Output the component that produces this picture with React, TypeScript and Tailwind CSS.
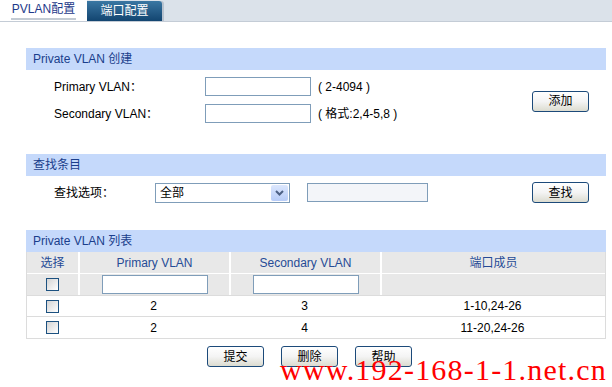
import React from 'react'

const font = "font-['Liberation_Sans','Noto_Sans_CJK_SC',sans-serif]"

function Checkbox() {
  return (
    <span className="inline-block w-[13px] h-[13px] border border-[#1c5180] bg-gradient-to-br from-[#d4d4d4] to-white" />
  )
}

function Btn({ label }: { label: string }) {
  return (
    <button className="w-[57px] h-[21px] rounded-[3px] border border-[#1c4a7a] bg-gradient-to-b from-white via-[#f4f4f4] to-[#dcdcd0] text-[12px] text-black leading-none">
      {label}
    </button>
  )
}

function SectionHeader({ title }: { title: string }) {
  return (
    <div className="h-[22px] bg-[#c5d9fb] flex items-center pl-[7px] text-[12px] text-[#1a3e8c]">{title}</div>
  )
}

function TextBox({ w, bg = 'bg-white' }: { w: string; bg?: string }) {
  return <div className={`${w} h-[19px] border border-[#7f9db9] ${bg}`} />
}

export default function App() {
  return (
    <div className={`relative w-[612px] h-[387px] bg-white overflow-hidden ${font} text-[12px] text-black`}>
      {/* tabs */}
      <div className="flex h-[22px] bg-[#dbe2ea] border-b border-[#c4ccd6]">
        <div className="w-[87px] bg-white flex items-end justify-center pb-[1px]">
          <span className="text-[#1e3a8a] border-b-2 border-[#c3cbd3] px-[1px] leading-[18px]">PVLAN配置</span>
        </div>
        <div className="mt-[1px] w-[75px] rounded-tr-[3px] bg-gradient-to-b from-[#3a77a3] to-[#124570] text-white flex items-center justify-center shadow-[2px_0_0_#b9c3cf]">
          端口配置
        </div>
      </div>

      <div className="ml-[26px] w-[580px]">
        {/* section 1 */}
        <div className="mt-[26px]">
          <SectionHeader title="Private VLAN 创建" />
          <div className="flex items-center pt-[7px]">
            <div className="flex flex-col gap-[8px] flex-1">
              <div className="flex items-center h-[19px]">
                <span className="w-[179px] shrink-0 pl-[28px]">Primary VLAN：</span>
                <TextBox w="w-[106px]" />
                <span className="ml-[7px]">( 2-4094 )</span>
              </div>
              <div className="flex items-center h-[19px]">
                <span className="w-[179px] shrink-0 pl-[28px]">Secondary VLAN：</span>
                <TextBox w="w-[106px]" />
                <span className="ml-[7px]">( 格式:2,4-5,8 )</span>
              </div>
            </div>
            <div className="mr-[17px] mt-[2px]">
              <Btn label="添加" />
            </div>
          </div>
        </div>

        {/* section 2 */}
        <div className="mt-[31px]">
          <SectionHeader title="查找条目" />
          <div className="flex items-center pt-[6px]">
            <span className="w-[129px] shrink-0 pl-[28px]">查找选项：</span>
            <div className="w-[135px] h-[20px] border border-[#7f9db9] bg-white flex items-center justify-between pl-[4px] pr-[1px]">
              <span>全部</span>
              <span className="w-[17px] h-[16px] rounded-[2px] bg-gradient-to-b from-[#dce7fd] to-[#b7ccf8] flex items-center justify-center">
                <svg width="9" height="6" viewBox="0 0 9 6">
                  <path d="M1 1 L4.5 4.5 L8 1" stroke="#4d6185" strokeWidth="2" fill="none" />
                </svg>
              </span>
            </div>
            <div className="ml-[17px]">
              <TextBox w="w-[121px]" bg="bg-[#f3f5f9]" />
            </div>
            <div className="ml-auto mr-[17px]">
              <Btn label="查找" />
            </div>
          </div>
        </div>

        {/* section 3 */}
        <div className="mt-[27px]">
          <SectionHeader title="Private VLAN 列表" />
          <div className="border-x border-b border-[#dcdcdc]">
            <div className="grid grid-cols-[51px_151px_151px_1fr] h-[22px] bg-[#e8e8e8] border-b border-white text-[#264b96]">
              <div className="flex items-center justify-center">选择</div>
              <div className="flex items-center justify-center border-l-2 border-white">Primary VLAN</div>
              <div className="flex items-center justify-center border-l-2 border-white">Secondary VLAN</div>
              <div className="flex items-center justify-center border-l-2 border-white">端口成员</div>
            </div>
            <div className="grid grid-cols-[51px_151px_151px_1fr] h-[22px] bg-[#e8e8e8] border-b border-[#dcdcdc]">
              <div className="flex items-center justify-center"><Checkbox /></div>
              <div className="flex items-center justify-center border-l-2 border-white"><TextBox w="w-[106px]" /></div>
              <div className="flex items-center justify-center border-l-2 border-white"><TextBox w="w-[106px]" /></div>
              <div className="border-l-2 border-white" />
            </div>
            {[
              ['2', '3', '1-10,24-26'],
              ['2', '4', '11-20,24-26'],
            ].map((r, i) => (
              <div
                key={i}
                className={`grid grid-cols-[51px_151px_151px_1fr] h-[21px] ${i === 0 ? 'border-b border-[#dcdcdc]' : ''}`}
              >
                <div className="flex items-center justify-center"><Checkbox /></div>
                <div className="flex items-center justify-center">{r[0]}</div>
                <div className="flex items-center justify-center">{r[1]}</div>
                <div className="flex items-center justify-center">{r[2]}</div>
              </div>
            ))}
          </div>
        </div>

        {/* bottom buttons */}
        <div className="flex gap-[17px] mt-[7px] ml-[181px]">
          <Btn label="提交" />
          <Btn label="删除" />
          <Btn label="帮助" />
        </div>
      </div>

      <div className="absolute left-[280px] top-[355px] text-[30px] leading-[30px] tracking-[1.2px] text-[#ff0000] font-['Liberation_Serif',serif] whitespace-nowrap">
        www.192-168-1-1.net.cn
      </div>
    </div>
  )
}
